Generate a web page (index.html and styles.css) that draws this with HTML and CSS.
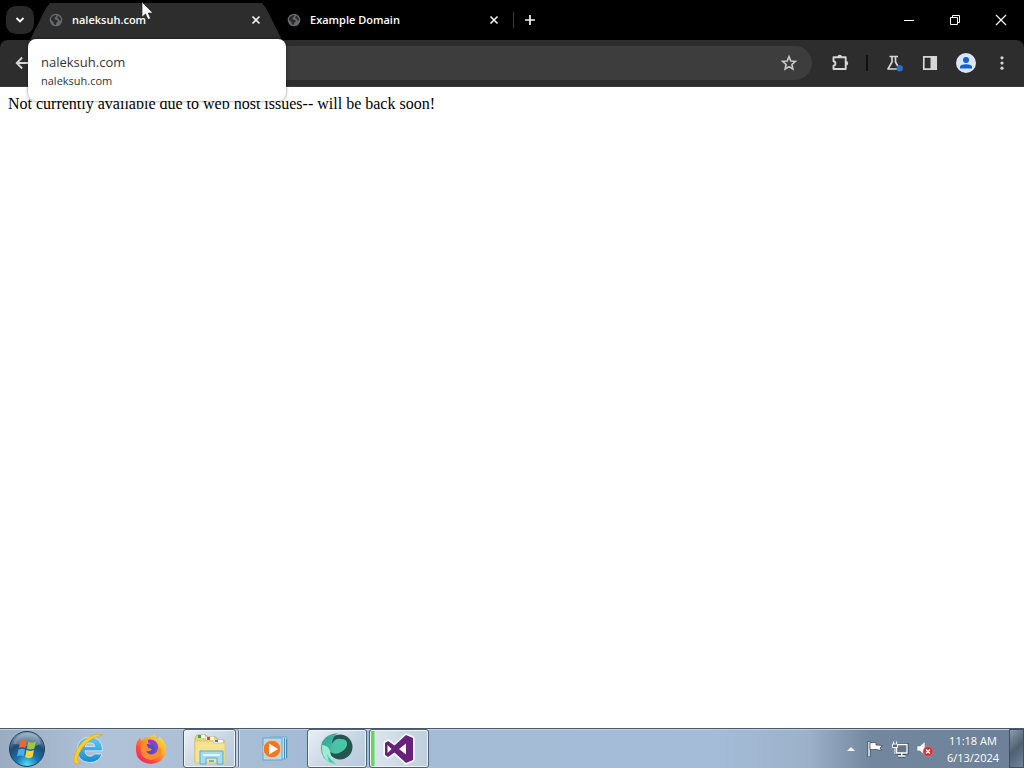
FILE: index.html
```html
<!DOCTYPE html>
<html lang="en">
<head>
<meta charset="utf-8">
<title>naleksuh.com</title>
<link rel="stylesheet" href="styles.css">
</head>
<body>
<svg class="defs" aria-hidden="true">
  <symbol id="globe" viewBox="0 0 14 14">
    <circle cx="7" cy="7" r="6.3" fill="#68696d"/>
    <path d="M2.2 5Q4 2 7.5 2L7 3.8 5.6 4.6 5.8 6.6 8.3 7 8.8 8.8 7.4 9.6 6.8 12 4.6 11 4.5 9 2 7ZM9.2 2.6 11.6 5 12 7.6 10.6 7.4 9.4 5.6 8 5Z" fill="#2a2a2c"/>
  </symbol>
  <symbol id="close" viewBox="0 0 12 12"><path d="M2.5 2.5 9.5 9.5M9.5 2.5 2.5 9.5" stroke="#f2f2f2" stroke-width="1.6"/></symbol>
</svg>

<header class="browser">
  <div class="tabstrip">
    <button class="tab-search" aria-label="Search tabs"><svg width="12" height="12" viewBox="0 0 12 12"><path d="M2.5 4 6 7.5 9.5 4" fill="none" stroke="#fff" stroke-width="1.8"/></svg></button>
    <div class="tab tab-active">
      <svg class="favicon"><use href="#globe"/></svg>
      <span class="tab-title">naleksuh.com</span>
      <button class="icon-button" aria-label="Close tab"><svg width="12" height="12"><use href="#close"/></svg></button>
    </div>
    <div class="tab tab-inactive">
      <svg class="favicon"><use href="#globe"/></svg>
      <span class="tab-title">Example Domain</span>
      <button class="icon-button" aria-label="Close tab"><svg width="12" height="12"><use href="#close"/></svg></button>
    </div>
    <span class="tab-divider"></span>
    <button class="icon-button new-tab" aria-label="New tab"><svg width="12" height="12" viewBox="0 0 12 12"><path d="M6 1V11M1 6H11" stroke="#f2f2f2" stroke-width="1.7"/></svg></button>
    <div class="window-controls">
      <button class="icon-button" aria-label="Minimize"><svg width="12" height="12" viewBox="0 0 12 12"><path d="M1 6.5H11" stroke="#fff"/></svg></button>
      <button class="icon-button" aria-label="Restore"><svg width="12" height="12" viewBox="0 0 12 12"><path d="M1.5 3.5H8.5V10.5H1.5ZM3.5 3.5V1.5H10.5V8.5H8.5" fill="none" stroke="#fff"/></svg></button>
      <button class="icon-button" aria-label="Close"><svg width="12" height="12" viewBox="0 0 12 12"><path d="M1 1 11 11M11 1 1 11" stroke="#fff" stroke-width="1.2"/></svg></button>
    </div>
  </div>

  <div class="toolbar-back">
  <div class="toolbar">
    <button class="icon-button back" aria-label="Back"><svg width="16" height="16" viewBox="0 0 16 16"><path d="M8.2 2.5 2.7 8 8.2 13.5M3 8H14" fill="none" stroke="#d8d8d8" stroke-width="1.8"/></svg></button>
    <div class="omnibox">
      <input class="address" type="text" aria-label="Address">
      <button class="icon-button" aria-label="Bookmark this tab"><svg width="18" height="18" viewBox="0 0 18 18"><path d="M9 2.6 10.8 7 15.4 7.4 11.9 10.5 12.9 15 9 12.6 5.1 15 6.1 10.5 2.6 7.4 7.2 7Z" fill="none" stroke="#c9c9c9" stroke-width="1.6"/></svg></button>
    </div>
    <div class="actions">
      <button class="icon-button" aria-label="Extensions"><svg width="20" height="20" viewBox="0 0 20 20"><path d="M3.5 4.3H15.7V16H3.5V12.6C6 12.4 6 8.4 3.5 8.2Z" fill="none" stroke="#d6d6d6" stroke-width="1.9" stroke-linejoin="round"/><path d="M7.5 4A2.2 2.2 0 0 1 11.9 4ZM16 8A2.2 2.2 0 0 1 16 12.4Z" fill="#d6d6d6"/></svg></button>
      <span class="action-divider"></span>
      <button class="icon-button" aria-label="Experiments"><svg width="20" height="20" viewBox="0 0 20 20"><path d="M5.5 3.5H14M8 3.5V9L4 16H15.5L11.5 9V3.5" fill="none" stroke="#d6d6d6" stroke-width="1.7" stroke-linejoin="round"/><circle cx="15.7" cy="15.3" r="3.2" fill="#2870c8"/></svg></button>
      <button class="icon-button" aria-label="Side panel"><svg width="20" height="20" viewBox="0 0 20 20"><path d="M3.8 3.8H16.2V16.2H3.8Z" fill="none" stroke="#d6d6d6" stroke-width="1.7"/><path d="M10.5 3H17V17H10.5Z" fill="#d6d6d6"/></svg></button>
      <button class="icon-button" aria-label="Profile"><svg width="20" height="20" viewBox="0 0 20 20"><circle cx="10" cy="10" r="10" fill="#dbe6fb"/><circle cx="10" cy="7" r="3" fill="#1261d0"/><path d="M4 15.5V14Q4 11.3 10 11.3T16 14V15.5Z" fill="#1261d0"/></svg></button>
      <button class="icon-button" aria-label="Menu"><svg width="20" height="20" viewBox="0 0 20 20" fill="#d6d6d6"><circle cx="10" cy="4.8" r="1.6"/><circle cx="10" cy="10" r="1.6"/><circle cx="10" cy="15.2" r="1.6"/></svg></button>
    </div>
  </div>
  </div>
  <div class="hover-card" role="tooltip">
    <div class="card-title">naleksuh.com</div>
    <div class="card-domain">naleksuh.com</div>
  </div>
  <svg class="cursor" width="13" height="20" viewBox="0 0 13 20"><path d="M1 1V16.2L4.5 12.9 7 18.6 9.6 17.4 7.2 12H12Z" fill="#fff" stroke="#222" stroke-width=".7"/></svg>
</header>

<main class="page">Not currently available due to web host issues-- will be back soon!</main>

<footer class="taskbar">
  <button class="start" aria-label="Start">
    <svg width="38" height="38" viewBox="0 0 38 38">
      <defs><radialGradient id="orb" cx=".5" cy=".95" r=".95"><stop offset="0" stop-color="#52dcf5"/><stop offset=".35" stop-color="#1673b0"/><stop offset=".65" stop-color="#204c72"/><stop offset="1" stop-color="#8ea9bd"/></radialGradient></defs>
      <circle cx="19" cy="19" r="17.5" fill="url(#orb)" stroke="#24405c"/>
      <path d="M5 14Q8 4 19 3T33 14Q25 18 19 16T5 14Z" fill="#fff" opacity=".25"/>
      <path d="M12.3 11Q15.5 9 18.8 11L17.4 18Q14 16.5 10.8 18Z" fill="#ed672b"/>
      <path d="M20.3 11.6Q24 13.5 28 11.4L26.4 18.5Q22.6 20.3 18.9 18.5Z" fill="#9bc83e"/>
      <path d="M10.5 19.5Q13.8 17.9 17.1 19.5L15.7 26.3Q12.3 24.8 9 26.4Z" fill="#57a8e8"/>
      <path d="M18.6 20.1Q22.3 21.8 26 20L24.5 27Q20.8 28.8 17.2 27Z" fill="#ffd33e"/>
    </svg>
  </button>
  <div class="tasks">
    <button class="task" aria-label="Internet Explorer">
      <svg width="34" height="34" viewBox="0 0 34 34"><defs><linearGradient id="ie" x2="0" y2="1"><stop stop-color="#62c9f3"/><stop offset="1" stop-color="#168bd0"/></linearGradient></defs>
        <path d="M30.5 18.8H13Q13.4 24 18 24.2 21 24.3 22.4 22H30Q27 30.5 18 30.5 5.5 29.8 5.3 18 5.5 5.6 18 5 30.5 5.6 30.5 18.8ZM13 14.5H22.9Q22.3 10.8 18 10.7 13.8 10.8 13 14.5Z" fill="url(#ie)" stroke="#e4f6ff" stroke-width=".7"/>
        <path d="M31 3.2C23-1 9 8 4.5 18.5-.6 29.5 2 33.8 8.4 31 4.5 30 4.7 25 9 18 14.4 9.6 24.5 3 31 3.2Z" fill="#ffcd24" stroke="#db9d12" stroke-width=".5"/></svg>
    </button>
    <button class="task" aria-label="Firefox">
      <svg width="34" height="34" viewBox="0 0 34 34"><defs><linearGradient id="fx" x1="1" x2=".1" y2="1"><stop stop-color="#fff04a"/><stop offset=".4" stop-color="#ffad25"/><stop offset=".7" stop-color="#ff4c3c"/><stop offset="1" stop-color="#e81e69"/></linearGradient></defs>
        <path d="M3 10 6 5.5 7.5 9Q11 5 15 5L21 2Q21 6 25 8L25.2 4Q31.8 9.5 31.8 17 31.3 30.6 17 32 2.2 30.6 2 18 1.8 13 3 10Z" fill="url(#fx)"/>
        <circle cx="17.4" cy="17.3" r="7.4" fill="#6650d6"/>
        <path d="M6.5 11.5Q12 9 17 12.3 14.5 14 14 15.5 17 15.8 18.5 17.5 15.5 20.5 12 19 15 23.5 20 22 24.2 20 24 14.5L27.5 17Q26.5 27.5 17 28 7 27.5 6.5 17Z" fill="#ff8a30"/>
        <path d="M12.5 12.2Q17 11 20 14.5 22 19 18.5 21.5 14.5 22.5 12.5 19.5 16 20 18 17.8 16.5 16 14 15.5Z" fill="#5949c8"/>
        <path d="M13.5 7.7Q22 6 24.7 14.5 20 8.8 14.5 11Z" fill="#a335cc"/></svg>
    </button>
    <button class="task task-open task-stack" aria-label="Windows Explorer">
      <svg width="36" height="34" viewBox="0 0 36 34"><path d="M3 6 5 3H14L16 5H24L26 8H32V31L3 30Z" fill="#e9d37d" stroke="#cab35a"/><path d="M6 3H13V6H6Z" fill="#fff"/><path d="M6 3H9V6H6Z" fill="#40a340"/><path d="M14 5H22V8H14Z" fill="#fff"/><path d="M15 5H18V8H15Z" fill="#db4436"/><path d="M22 8H31V11H22Z" fill="#fff"/><path d="M23 8H26V10H23Z" fill="#4580c5"/><path d="M3 9H19L22 11H33V31H3Z" fill="#f3e392" stroke="#dccb73"/><path d="M8 32V19H31V32H25V26H14V32Z" fill="#a4dbee" stroke="#58a9d2"/><path d="M11 22H28V24H11Z" fill="#dcf5fb"/><path d="M17 28H22V30H17Z" fill="#6cb2d8"/></svg>
    </button>
    <button class="task" aria-label="Windows Media Player">
      <svg width="28" height="28" viewBox="0 0 28 28"><path d="M9 2H26V24H9Z" fill="#bfe0f1" stroke="#6aa9ce"/><path d="M23.5 3V24M25.5 4V23" stroke="#478bb8"/><path d="M2 3H21V25H2Z" fill="#b2daf0" stroke="#65a5cc"/><circle cx="11" cy="14" r="8.8" fill="#ee7925" stroke="#fac69a"/><path d="M8 8.5 17 14 8 19.5Z" fill="#fff"/></svg>
    </button>
    <button class="task task-open" aria-label="Chromium browser">
      <svg width="34" height="34" viewBox="0 0 34 34"><defs><linearGradient id="teal" y2="1"><stop stop-color="#2d9f8c"/><stop offset="1" stop-color="#5fdfba"/></linearGradient></defs>
        <circle cx="20" cy="15" r="12.5" fill="#26544f"/>
        <path d="M18 1Q6 2 2 10-1 19 4 26 8 31 16 32 9 27 9 19 15 24 21 20 27 17 27 11 24 7 18 8 14 8 12 12 12 5 18 1Z" fill="url(#teal)"/>
        <path d="M12 12Q15 6 21 7 27 7 27 12 25 19 19 20 12 20 12 12Z" fill="#49c4a7"/>
        <path d="M2 13Q8 13 10 19 11 27 18 31 10 29 7 22L9 30Q1 25 2 13Z" fill="#a0ead2"/></svg>
    </button>
    <button class="task task-open task-progress" aria-label="Visual Studio">
      <svg width="36" height="34" viewBox="0 0 36 34"><path d="M25 3 32 6V28L25 31 13.5 20.5 7 25 4 23V11L7 9 13.5 13.5Z" fill="#68217a" stroke="#fff" stroke-width="3" stroke-linejoin="round" paint-order="stroke"/><path d="M6.5 13V21L10.5 17ZM25 11.5V22.5L18 17Z" fill="#fff"/></svg>
    </button>
  </div>
  <div class="tray">
    <button class="icon-button tray-more" aria-label="Show hidden icons"><svg width="8" height="6" viewBox="0 0 8 6"><path d="M0 5 4 1 8 5Z" fill="#f2f6fa"/></svg></button>
    <button class="icon-button" aria-label="Action Center"><svg width="18" height="18" viewBox="0 0 18 18"><path d="M3 1.5V17" stroke="#33445a" stroke-width="3"/><path d="M3 2V16.5" stroke="#fff" stroke-width="1.5"/><path d="M4 2.5H10V5L16.5 5.5 14 8 15.5 10.5 10 9.5H4Z" fill="#fff" stroke="#33445a" stroke-width=".7"/></svg></button>
    <button class="icon-button" aria-label="Network"><svg width="18" height="18" viewBox="0 0 18 18"><path d="M5.5 4.5H16V13H5.5ZM10.8 13V16M7 16H14.5" fill="#63758b" stroke="#33445a" stroke-width="3"/><path d="M5.5 4.5H16V13H5.5ZM10.8 13V16M7 16H14.5" fill="#63758b" stroke="#fff" stroke-width="1.3"/><path d="M2.5 1.5V4M5.5 1.5V4M1.5 4H6.5V7.5H1.5ZM4 7.5V14" fill="#53667d" stroke="#fff"/></svg></button>
    <button class="icon-button" aria-label="Volume muted"><svg width="18" height="18" viewBox="0 0 18 18"><path d="M1 6H4L9 1.5V15.5L4 11H1Z" fill="#fff" stroke="#677587" stroke-width=".6"/><circle cx="12" cy="11.5" r="5" fill="#d62e32" stroke="#f18b8b" stroke-width=".5"/><path d="M10 9.5 14 13.5M14 9.5 10 13.5" stroke="#fff" stroke-width="1.5"/></svg></button>
    <time class="clock" datetime="2024-06-13T11:18"><span>11:18 AM</span><span>6/13/2024</span></time>
    <button class="show-desktop" aria-label="Show desktop"></button>
  </div>
</footer>
</body>
</html>
```

FILE: styles.css
```css
* { box-sizing: border-box; }
body {
  margin: 0;
  min-height: 100vh;
  display: flex;
  flex-direction: column;
  background: #fff;
  font-family: "Open Sans", "Noto Sans", sans-serif;
}
button { border: 0; padding: 0; background: none; font: inherit; }
svg { display: block; flex: none; }
.defs { position: absolute; width: 0; height: 0; }
.icon-button { display: flex; align-items: center; justify-content: center; flex: none; }

.browser { position: relative; color: #fff; background: #000; }
.tabstrip { display: flex; align-items: center; height: 40px; padding-left: 6px; }
.tab-search {
  display: flex;
  align-items: center;
  justify-content: center;
  width: 28px;
  height: 28px;
  border-radius: 10px;
  background: #292929;
}
.tab {
  display: flex;
  align-items: center;
  gap: 9px;
  height: 37px;
  align-self: flex-end;
  padding-bottom: 3px;
}
.tab-active {
  width: 252px;
  margin-left: -4px;
  padding-left: 19px;
  padding-right: 20px;
  background: #2d2d2d;
  clip-path: polygon(0 100%, 16px 5px, 20px 0, 232px 0, 236px 5px, 100% 100%);
}
.tab-inactive { width: 226px; margin-left: 5px; padding-right: 13px; }
.favicon { width: 14px; height: 14px; }
.tab-title { flex: 1; font-size: 11px; font-weight: 600; line-height: 16px; white-space: nowrap; }
.tab-divider { width: 1px; height: 16px; background: #3c3c3c; }
.new-tab { margin-left: 10px; }
.window-controls { display: flex; margin-left: auto; }
.window-controls .icon-button { width: 46px; height: 40px; }

.toolbar {
  display: flex;
  align-items: center;
  height: 46px;
  padding: 0 12px 0 14px;
  border-radius: 8px 8px 0 0;
  background: #2d2d2d;
}
.toolbar-back { background: #000; border-bottom: 1px solid #3c3c3c; }
.omnibox {
  display: flex;
  align-items: center;
  flex: 1;
  height: 34px;
  margin-left: 78px;
  padding-right: 14px;
  border-radius: 17px;
  background: #3d3d3d;
}
.address { flex: 1; min-width: 0; border: 0; outline: 0; background: none; color: #fff; }
.actions { display: flex; align-items: center; gap: 16px; margin-left: 18px; }
.action-divider { width: 2px; height: 16px; background: #111; }

.hover-card {
  position: absolute;
  top: 39px;
  left: 28px;
  width: 258px;
  padding: 14px 13px 11px;
  border-radius: 8px;
  background: #fff;
  color: #333;
  box-shadow: 0 0 3px rgba(0, 0, 0, .5);
}
.card-title { font-size: 13px; line-height: 18px; }
.card-domain { font-size: 11px; line-height: 19px; }
.cursor { position: absolute; top: 1px; left: 141px; }

.page { flex: 1; padding: 8px; font: 16px/18px "Liberation Serif", serif; color: #000; }

.taskbar {
  display: flex;
  height: 40px;
  border-top: 1px solid #46586c;
  background: linear-gradient(90deg, #9aacc2, #b0c2d7 10%, #a4bbd5 30%, #a4bcd8 70%, #9cb1c9 79%, #73879f 85%, #6c8098);
  box-shadow: inset 0 1px #c2d0df;
}
.start { display: flex; align-items: center; width: 59px; padding-left: 8px; }
.tasks { display: flex; gap: 2px; }
.task {
  display: flex;
  align-items: center;
  justify-content: center;
  width: 60px;
  border-radius: 3px;
}
.task-open {
  border: 1px solid #4e6075;
  background: linear-gradient(135deg, #e9eff5, #c5d3e2 60%, #b8cadd);
  box-shadow: inset 0 0 0 1px #eff5fa;
}
.task-stack { width: 53px; margin-right: 7px; box-shadow: inset 0 0 0 1px #eff5fa, 2px 0 #c4d3e3, 3px 0 #607287, 4px 0 #d2deea; }
.task-progress { background: linear-gradient(90deg, #5fdc55 4px, #dbe5ee 5px, #becede); }

.tray { display: flex; align-items: center; gap: 7px; margin-left: auto; color: #fff; }
.tray-more { margin-right: 4px; }
.clock {
  display: flex;
  flex-direction: column;
  align-items: center;
  width: 58px;
  margin-left: 3px;
  font: 11px/17px "Open Sans", "Noto Sans", sans-serif;
}
.show-desktop {
  align-self: stretch;
  width: 15px;
  border: 1px solid #3f5064;
  background: linear-gradient(135deg, #8c9bac, #4f6073 50%, #71849a);
}
```
